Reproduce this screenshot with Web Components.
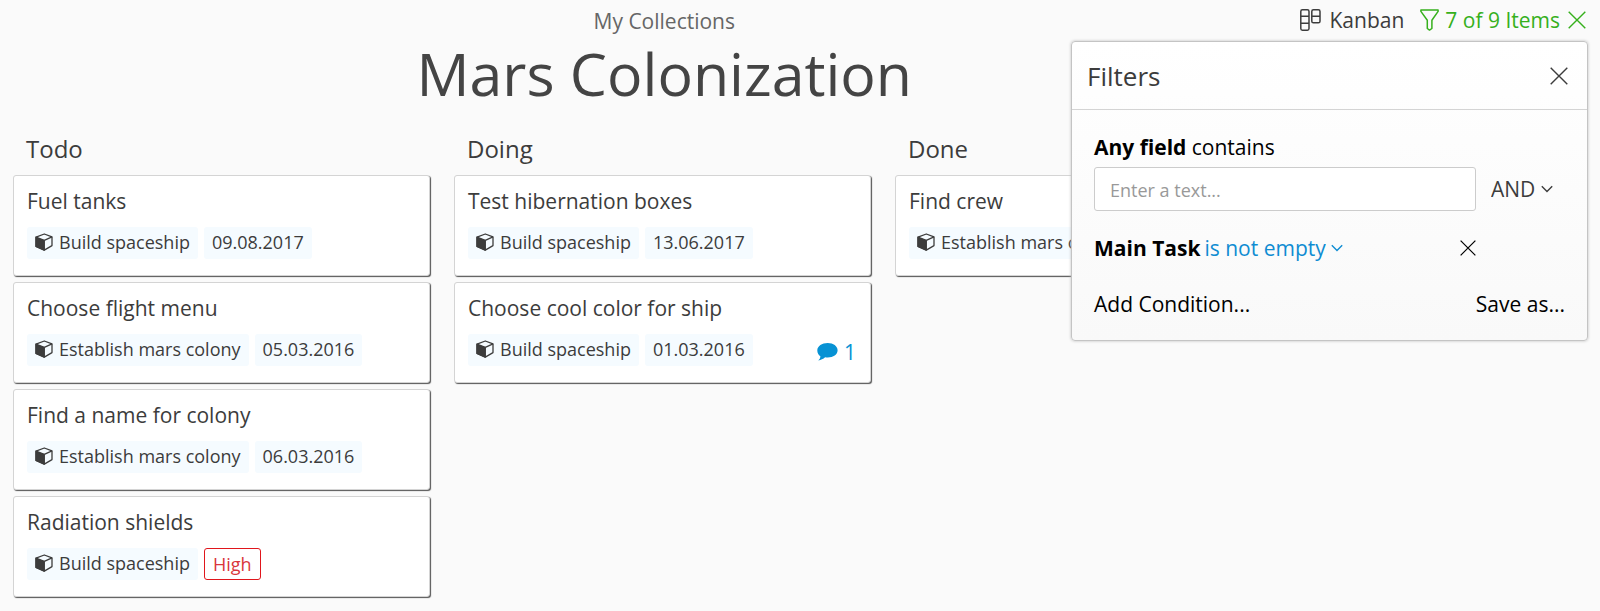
<!DOCTYPE html>
<html lang="en">
<head>
<meta charset="utf-8">
<title>Mars Colonization</title>
<style>
body { margin: 0; min-height: 100vh; background: #fafafa; color: #3c3c3c; font-family: "Open Sans", sans-serif; font-size: 21px; line-height: 28px; }
</style>
</head>
<body>
<app-page>
  <page-title slot="title" parent="My Collections">Mars Colonization</page-title>
  <view-tools slot="tools"></view-tools>
  <board-column heading="Todo">
    <task-card heading="Fuel tanks"><task-chip kind="ref">Build spaceship</task-chip><task-chip>09.08.2017</task-chip></task-card>
    <task-card heading="Choose flight menu"><task-chip kind="ref">Establish mars colony</task-chip><task-chip>05.03.2016</task-chip></task-card>
    <task-card heading="Find a name for colony"><task-chip kind="ref">Establish mars colony</task-chip><task-chip>06.03.2016</task-chip></task-card>
    <task-card heading="Radiation shields"><task-chip kind="ref">Build spaceship</task-chip><task-chip kind="high">High</task-chip></task-card>
  </board-column>
  <board-column heading="Doing">
    <task-card heading="Test hibernation boxes"><task-chip kind="ref">Build spaceship</task-chip><task-chip>13.06.2017</task-chip></task-card>
    <task-card heading="Choose cool color for ship" comments="1"><task-chip kind="ref">Build spaceship</task-chip><task-chip>01.03.2016</task-chip></task-card>
  </board-column>
  <board-column heading="Done">
    <task-card heading="Find crew"><task-chip kind="ref">Establish mars colony</task-chip></task-card>
  </board-column>
  <filter-panel slot="popup"></filter-panel>
</app-page>
<script>
const define = (name, html) => {
  const template = document.createElement('template');
  customElements.define(name, class extends HTMLElement {
    constructor() {
      super();
      template.innerHTML = typeof html === 'function' ? html(this) : html;
      this.attachShadow({ mode: 'open' }).append(template.content.cloneNode(true));
    }
  });
};

const buttonReset = 'button { display: flex; align-items: center; margin: 0; padding: 0; border: 0; background: none; color: inherit; font: inherit; cursor: pointer; }';

define('icon-cross', `
<style>
:host { display: block; width: 18px; height: 18px; }
svg { display: block; width: 100%; height: 100%; }
</style>
<svg viewBox="0 0 18 18" fill="none" stroke="currentColor" stroke-width="1.4" aria-hidden="true"><path d="M.7.7l16.6 16.6M17.3.7L.7 17.3"/></svg>`);

define('app-page', `
<style>
:host { display: block; position: relative; }
header { display: grid; grid-template-columns: 1fr auto; align-items: start; padding: 0 12px 0 29px; }
main { display: grid; grid-template-columns: repeat(3, minmax(0, 1fr)); gap: 24px; align-items: start; padding: 0 288px 12px 13px; }
.popup { position: absolute; top: 41px; right: 12px; z-index: 1; }
</style>
<header><slot name="title"></slot><slot name="tools"></slot></header>
<main><slot></slot></main>
<div class="popup"><slot name="popup"></slot></div>`);

define('page-title', el => `
<style>
:host { display: block; padding-top: 7px; text-align: center; }
a { color: #666; text-decoration: none; }
h1 { margin: 0; font-size: 59px; font-weight: 400; line-height: 76px; color: #444; }
</style>
<a href="#collections">${el.getAttribute('parent')}</a>
<h1><slot></slot></h1>`);

define('view-tools', `
<style>
:host { display: flex; align-items: center; gap: 16px; padding-top: 6px; }
${buttonReset}
svg { display: block; fill: none; stroke: currentColor; stroke-width: 1.5; }
.view { gap: 9px; }
.filter { display: flex; align-items: center; gap: 8px; color: #36b01c; }
.count { gap: 6px; }
.clear { padding-right: 2px; }
</style>
<button class="view"><svg width="21" height="22" viewBox="0 0 21 22" aria-hidden="true"><rect x=".8" y=".8" width="8.2" height="20.4" rx="1.6"/><rect x="11.8" y=".8" width="8.2" height="13" rx="1.6"/><path d="M.8 7.3H9M.8 14.2H9M11.8 7.3H20"/></svg>Kanban</button>
<div class="filter">
  <button class="count"><svg width="19" height="22" viewBox="0 0 19 22" stroke-linejoin="round" aria-hidden="true"><path d="M.9.9h17.2v1.5l-6.2 8.8v8.3l-2.4 1.6-2.2-1.6v-8.3L.9 2.4z"/></svg>7 of 9 Items</button>
  <button class="clear" aria-label="Clear filter"><icon-cross></icon-cross></button>
</div>`);

define('board-column', el => `
<style>
:host { display: block; }
h2 { margin: 0; padding: 21px 0 9px 13px; font-size: 24px; font-weight: 400; line-height: 34px; }
.cards { display: grid; gap: 6px; }
</style>
<h2>${el.getAttribute('heading')}</h2>
<div class="cards"><slot></slot></div>`);

define('task-card', el => `
<style>
:host { display: block; }
article { padding: 11px 14px 16px 13px; border: 1px solid #d4d4d4; border-radius: 3px; background: #fff; box-shadow: 1px 1px 1px #555; }
h3 { margin: 0 0 11px; font-size: 21px; font-weight: 400; line-height: 29px; }
.row { display: flex; gap: 6px; }
${buttonReset}
button { gap: 6px; margin-left: auto; padding-top: 4px; color: #0792d4; line-height: 28px; }
svg { display: block; }
</style>
<article>
  <h3>${el.getAttribute('heading')}</h3>
  <div class="row"><slot></slot>${el.hasAttribute('comments') ? `<button aria-label="Comments"><svg width="21" height="18" viewBox="0 0 21 18" fill="currentColor" aria-hidden="true"><path d="M10.7 0C16.3 0 20.6 3.1 20.6 7.3S16.3 14.5 10.7 14.5q-1.3 0-2.6-.2C6.3 16 3.9 17.1 1.3 17.4c1.3-1.1 2-2.3 2.1-4.2C1.4 11.9.3 9.8.3 7.4.3 3.1 5 0 10.7 0z"/></svg>${el.getAttribute('comments')}</button>` : ''}</div>
</article>`);

define('task-chip', el => `
<style>
:host { display: flex; align-items: center; gap: 6px; box-sizing: border-box; height: 32px; padding: 0 8px 2px; border-radius: 3px; background: #f5fbff; font-size: 18px; line-height: 24px; }
:host([kind="high"]) { padding: 0 8px; border: 1px solid #e0161c; background: #fff; color: #d9363c; }
svg { display: block; }
</style>
${el.getAttribute('kind') === 'ref' ? '<svg width="18" height="18" viewBox="0 0 18 18" fill="none" stroke="currentColor" stroke-width="1.3" stroke-linejoin="round" aria-hidden="true"><path d="M9.3 1L17 3.9v8.7l-7.7 4.5L1 13.5V4.1z"/><path d="M1 4.1l8.3 3.2v9.8L1 13.5z" fill="currentColor"/><path d="M9.3 7.3L17 3.9"/></svg>' : ''}<span><slot></slot></span>`);

define('drop-down', el => `
<style>
:host { display: inline-grid; align-items: center; }
select { grid-area: 1 / 1; appearance: none; margin: 0; padding: 0 17px 0 0; border: 0; background: none; color: inherit; font: inherit; cursor: pointer; }
svg { grid-area: 1 / 1; justify-self: end; pointer-events: none; }
</style>
<select aria-label="${el.getAttribute('label')}"><option>${el.getAttribute('value')}</option></select>
<svg width="12" height="8" viewBox="0 0 12 8" fill="none" stroke="currentColor" stroke-width="1.4" aria-hidden="true"><path d="M.8 1.2L6 6.4l5.2-5.2"/></svg>`);

define('filter-panel', `
<style>
:host { display: block; box-sizing: border-box; width: 517px; border: 1px solid #c4c4c4; border-radius: 4px; background: linear-gradient(#fff, #f9f9f9); box-shadow: 0 0 3px #bbb; color: #000; }
${buttonReset}
header { display: flex; align-items: center; justify-content: space-between; padding: 16px 19px 15px 15px; border-bottom: 1px solid #d4d4d4; color: #3c3c3c; }
h2 { margin: 0; font-size: 26px; font-weight: 400; line-height: 36px; }
.body { padding: 23px 22px 22px; }
.text { display: grid; grid-template-columns: 382px 1fr; column-gap: 15px; align-items: center; }
label { grid-column: 1 / 3; padding-bottom: 6px; }
input { box-sizing: border-box; width: 100%; height: 44px; margin: 0; padding: 2px 15px 0; border: 1px solid #ccc; border-radius: 3px; background: #fff; color: inherit; font: inherit; font-size: 18px; }
input::placeholder { color: #999; opacity: 1; }
.and { justify-self: start; color: #3c3c3c; }
.task { display: flex; align-items: center; gap: 4px; width: 382px; padding: 23px 0 28px; }
.task drop-down { color: #0f8cd2; }
.task button { margin-left: auto; }
.task icon-cross { width: 16px; height: 16px; }
footer { display: flex; justify-content: space-between; }
</style>
<header><h2>Filters</h2><button aria-label="Close"><icon-cross></icon-cross></button></header>
<div class="body">
  <div class="text">
    <label for="query"><b>Any field</b> contains</label>
    <input id="query" type="text" placeholder="Enter a text...">
    <drop-down class="and" label="Operator" value="AND"></drop-down>
  </div>
  <div class="task"><b>Main Task</b><drop-down label="Condition" value="is not empty"></drop-down><button aria-label="Remove condition"><icon-cross></icon-cross></button></div>
  <footer><button>Add Condition...</button><button>Save as...</button></footer>
</div>`);
</script>
</body>
</html>
